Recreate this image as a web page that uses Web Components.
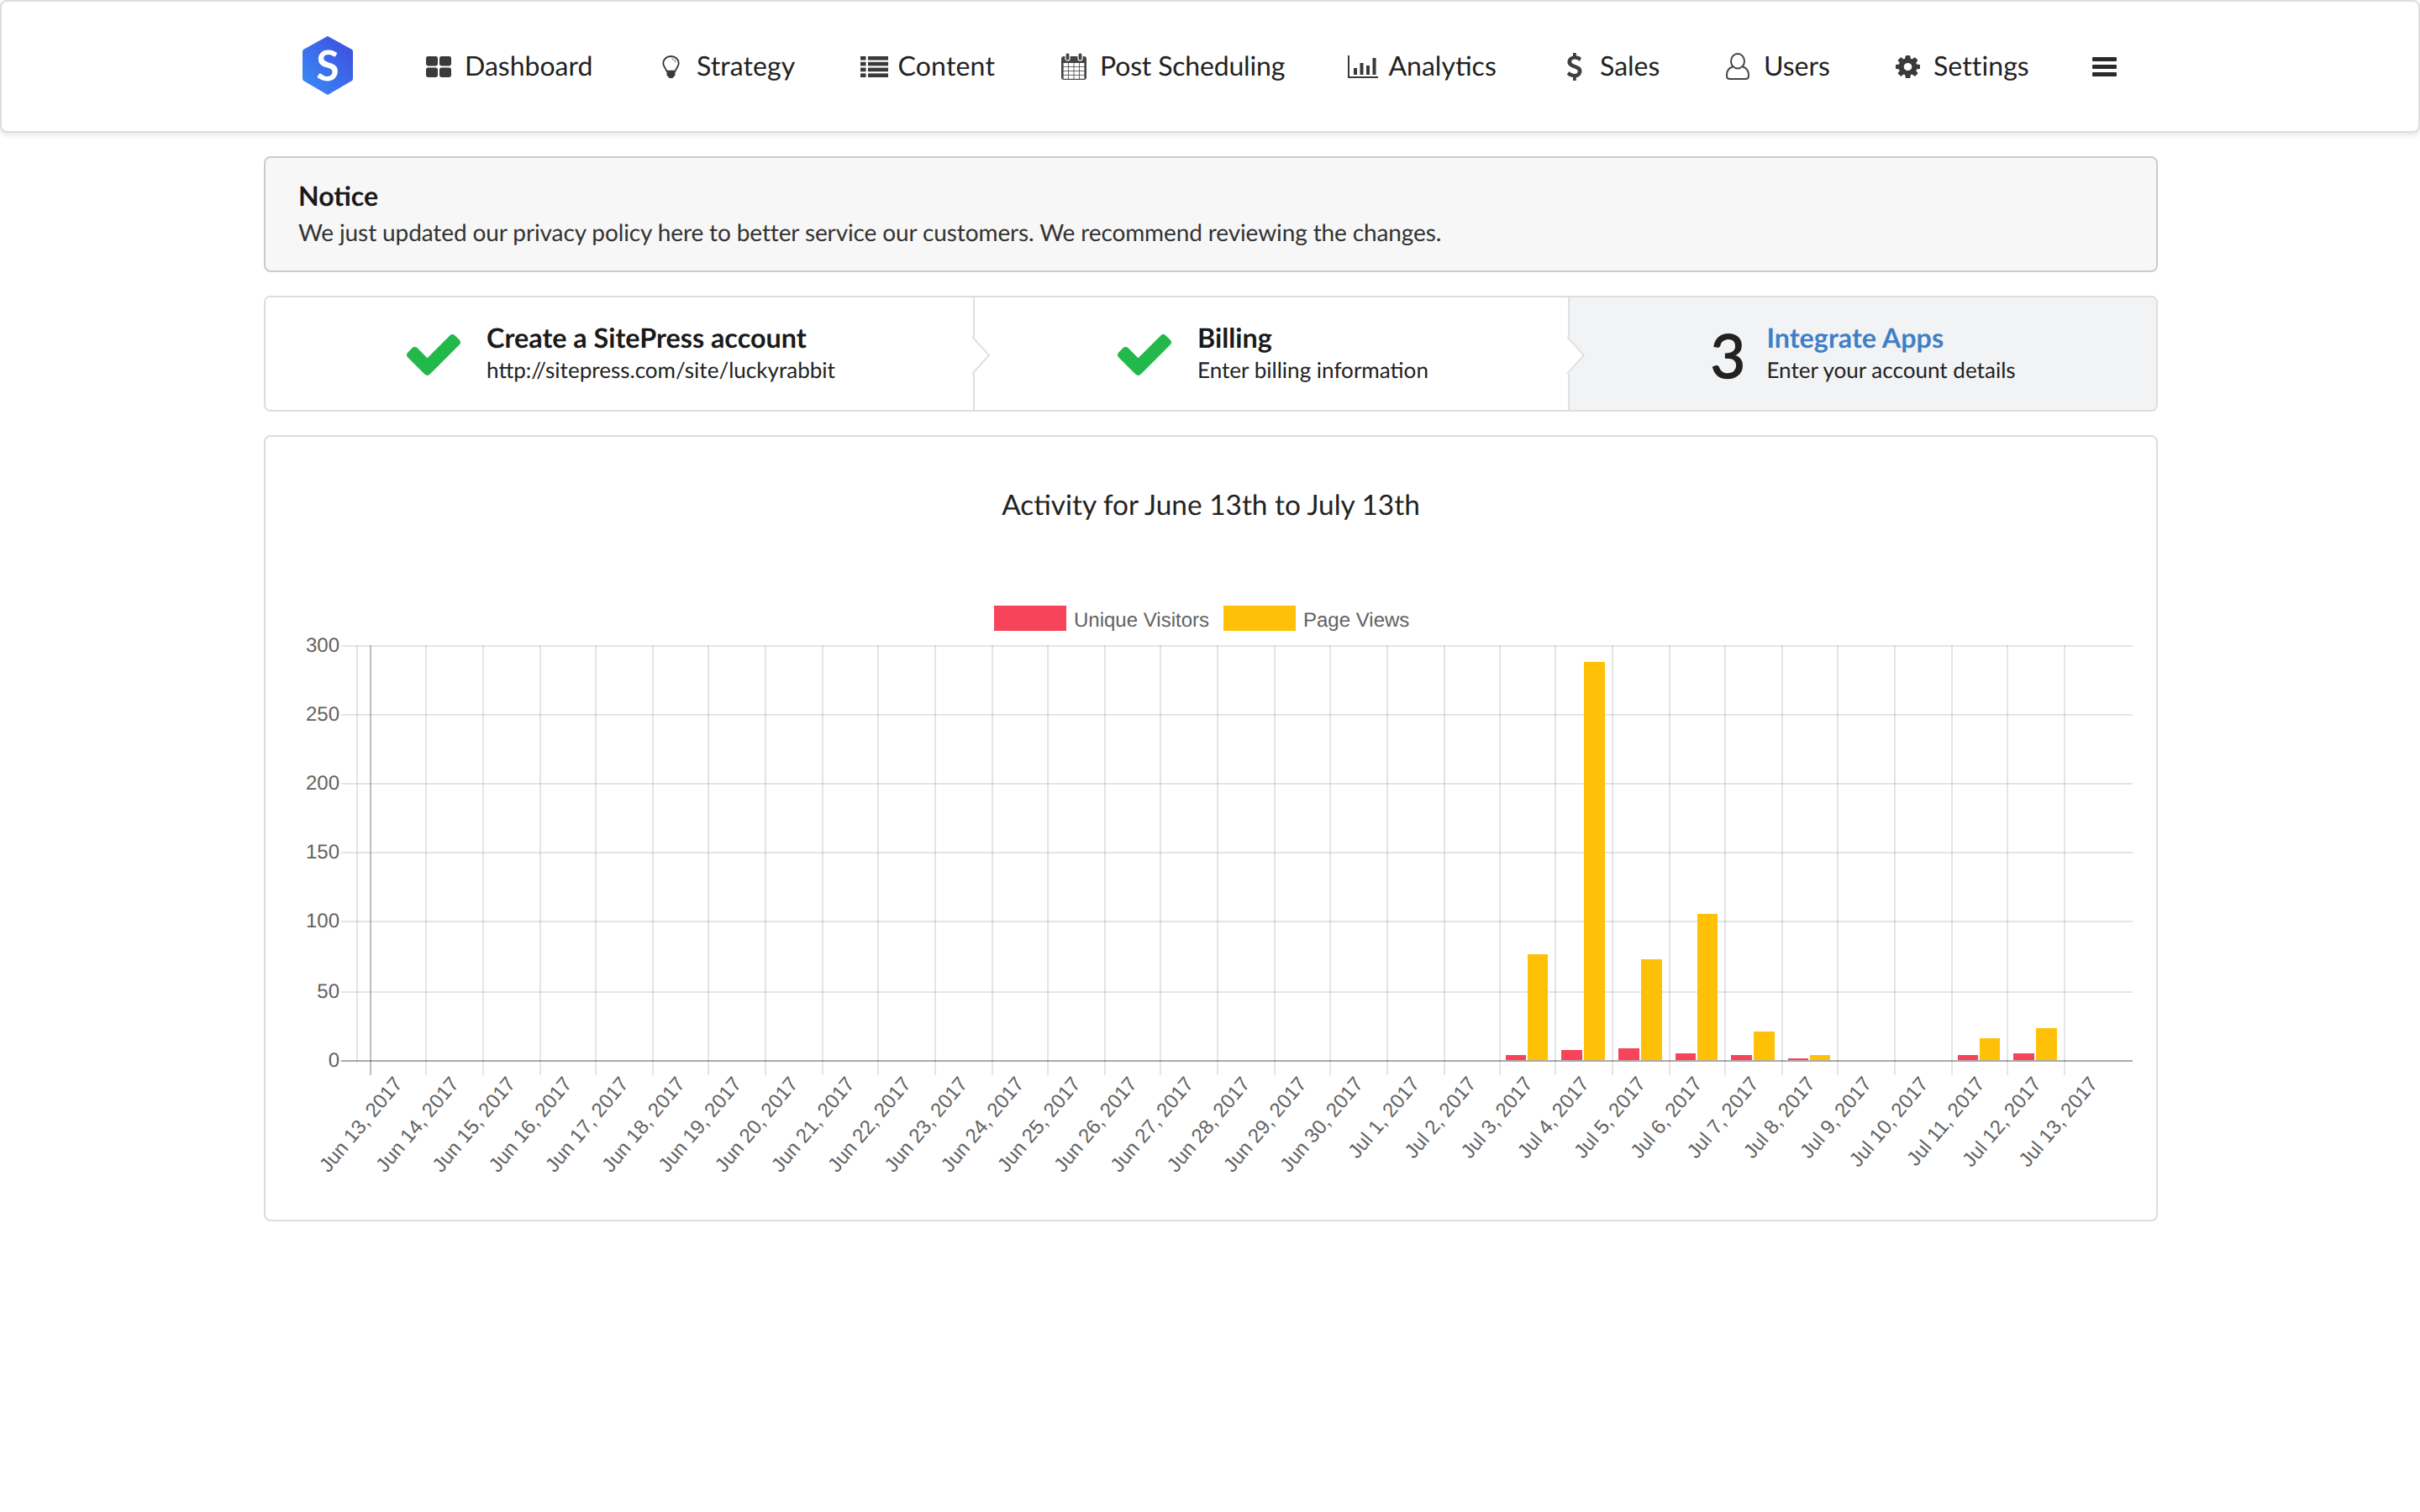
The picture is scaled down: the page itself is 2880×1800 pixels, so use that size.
<!DOCTYPE html>
<html lang="en"><head><meta charset="utf-8"><title>SitePress</title>
<style>html,body{margin:0;padding:0;background:#fff;font-family:Lato,"Noto Sans",sans-serif;color:#222;text-rendering:geometricPrecision}</style></head>
<body>
<app-nav>
  <brand-logo></brand-logo>
  <nav-item w="281" ig="46" icon="grid">Dashboard</nav-item>
  <nav-item w="235.5" ig="41" icon="bulb" style="letter-spacing:.1px">Strategy</nav-item>
  <nav-item w="239.5" ig="45" icon="list" style="letter-spacing:.2px">Content</nav-item>
  <nav-item w="340.5" ig="46" icon="cal" style="letter-spacing:-.18px">Post Scheduling</nav-item>
  <nav-item w="261" ig="49" icon="chart">Analytics</nav-item>
  <nav-item w="189.5" ig="39.5" icon="usd">Sales</nav-item>
  <nav-item w="202" ig="45" icon="user">Users</nav-item>
  <nav-item w="234" ig="45" icon="cog" style="letter-spacing:.1px">Settings</nav-item>
  <nav-item w="40" ig="40" icon="bars"></nav-item>
</app-nav>
<page-main>
  <notice-box heading="Notice">We just updated our privacy policy here to better service our customers. We recommend reviewing the changes.</notice-box>
  <step-bar>
    <step-item mark="check" heading="Create a SitePress account" w="844" arrow z="3">http://sitepress.com/site/luckyrabbit</step-item>
    <step-item mark="check" heading="Billing" w="708" arrow z="2">Enter billing information</step-item>
    <step-item mark="3" heading="Integrate Apps" active z="1">Enter your account details</step-item>
  </step-bar>
  <activity-chart heading="Activity for June 13th to July 13th"></activity-chart>
</page-main>
<script>
const def=(name,css,html,init)=>{customElements.define(name,class extends HTMLElement{
  constructor(){super();this.attachShadow({mode:'open'})}
  connectedCallback(){this.shadowRoot.innerHTML='<style>'+css+'</style>'+(typeof html==='function'?html(this):html);init&&init(this)}
})};
const ICONS={
grid:[30,25,'<rect width="14" height="11.5" rx="2.4"/><rect x="16" width="14" height="11.5" rx="2.4"/><rect y="13.5" width="14" height="11.5" rx="2.4"/><rect x="16" y="13.5" width="14" height="11.5" rx="2.4"/>','#3a3a3a'],
bulb:[21,27,'<path d="M10.5 1C5 1 1.3 4.8 1.3 9.6c0 3.6 3 5.2 4 9h10.4c1-3.800 4-5.400 4-9C19.700 4.800 16 1 10.500 1z" fill="none" stroke="#333" stroke-width="1.800"/><path d="M11.500 4c2.400.3 4.300 2 4.600 4.300" fill="none" stroke="#555" stroke-width="1"/><path d="M5.500 18h10v5.500l-3 3.500h-4l-3-3.500z"/>','#3a3a3a'],
list:[33,25,'<rect width="6.500" height="4.600"/><rect x="9" width="24" height="4.600"/><rect y="6.800" width="6.500" height="4.600"/><rect x="9" y="6.800" width="24" height="4.600"/><rect y="13.600" width="6.500" height="4.600"/><rect x="9" y="13.600" width="24" height="4.600"/><rect y="20.400" width="6.500" height="4.600"/><rect x="9" y="20.400" width="24" height="4.600"/>','#3a3a3a'],
cal:[30,32,'<rect y="4" width="30" height="28" rx="3"/>'+[0,1,2,3].map(r=>[0,1,2,3].map(c=>`<rect x="${2.6+c*6.4}" y="${12+r*4.900}" width="5.600" height="4.100" fill="#fff"/>`).join('')).join('')+'<rect x="5" y="0" width="5" height="9" rx="2.200" stroke="#fff" stroke-width="1.200"/><rect x="20" y="0" width="5" height="9" rx="2.200" stroke="#fff" stroke-width="1.200"/>','#444'],
chart:[36,27,'<rect width="2" height="27"/><rect y="25" width="36" height="2"/><rect x="7" y="15" width="4" height="8"/><rect x="14.500" y="9" width="4" height="14"/><rect x="22" y="12" width="4" height="11"/><rect x="29.500" y="3" width="4" height="20"/>','#3a3a3a'],
usd:[18,33,'<g transform="translate(-8.100 -.6) scale(.0188 .0188)"><path d="M1362 1185q0 153-99.500 263.500t-258.500 136.500v175q0 14-9 23t-23 9h-135q-13 0-22.500-9.500t-9.500-22.500v-175q-66-9-127.500-31t-101.500-44.500-74-48-46.500-37.500-17.500-18q-17-21-2-41l103-135q7-10 23-12 15-2 24 9l2 2q113 99 243 125 37 8 74 8 81 0 142.500-43t61.500-122q0-28-15-53t-33.500-42-58.500-37.500-66-32-80-32.500q-39-16-61.500-25t-61.500-26.500-62.500-31-56.500-35.500-53.500-42.500-43.500-49-35.500-58-21-66.500-8.500-78q0-138 98-242t255-134v-180q0-13 9.500-22.500t22.500-9.500h135q14 0 23 9t9 23v176q57 6 110.500 23t87 33.500 63.500 37.500 39 29 15 14q17 18 5 38l-81 146q-8 15-23 16-14 3-27-7-3-3-14.500-12t-39-26.500-58.500-32-74.500-26-85.500-11.500q-95 0-155 43t-60 111q0 26 8.500 48t29.500 41.500 39.500 33 56 31 60.500 27 70 27.500q53 20 81 31.500t76 35 75.500 42.500 62 50 53 63.500 31.500 76.500 13 94z"/></g>','#3f3f3f'],
user:[28,32,'<path d="M14 1C9.500 1 6 5 6 10c0 4.500 3.500 8.500 8 8.500s8-4 8-8.500c0-5-3.500-9-8-9z" fill="none" stroke="#444" stroke-width="2"/><path d="M8 16.500C3.500 18 1 21.500 1 26v1.500C1 29.800 2.800 31 5 31h18c2.200 0 4-1.200 4-3.500V26c0-4.500-2.500-8-7-9.500" fill="none" stroke="#444" stroke-width="2"/>','#444'],
cog:[29,27,'<g transform="scale(.01888 .01758) translate(-128 -128)"><path d="M1152 896q0-106-75-181t-181-75-181 75-75 181 75 181 181 75 181-75 75-181zm512-109v222q0 12-8 23t-20 13l-185 28q-19 54-39 91 35 50 107 138 10 12 10 25t-9 23q-27 37-99 108t-94 71q-12 0-26-9l-138-108q-44 23-91 38-16 136-29 186-7 28-36 28h-222q-14 0-24.500-8.500t-11.500-21.500l-28-184q-49-16-90-37l-141 107q-10 9-25 9-14 0-25-11-126-114-165-168-7-10-7-23 0-12 8-23 15-21 51-66.500t54-70.500q-27-50-41-99l-183-27q-13-2-21-12.500t-8-23.500v-222q0-12 8-23t19-13l186-28q14-46 39-92-40-57-107-138-10-12-10-24 0-10 9-23 26-36 98.500-107.500t94.500-71.500q13 0 26 10l138 107q44-23 91-38 16-136 29-186 7-28 36-28h222q14 0 24.500 8.500t11.500 21.500l28 184q49 16 90 37l142-107q9-9 24-9 13 0 25 10 129 119 165 170 7 8 7 22 0 12-8 23-15 21-51 66.500t-54 70.500q26 50 41 98l183 28q13 2 21 12.500t8 23.500z"/></g>','#3a3a3a'],
bars:[29,23,'<rect width="29" height="5" rx="1"/><rect y="9" width="29" height="5" rx="1"/><rect y="18" width="29" height="5" rx="1"/>','#2a2a2a']
};
def('app-nav',`:host{display:flex;align-items:center;box-sizing:border-box;height:158px;padding-left:358px;background:#fff;border:2px solid #ddd;border-radius:8px;box-shadow:0 3px 6px rgba(0,0,0,.1)}`,'<slot></slot>');
def('brand-logo',`:host{display:block;width:147px;height:70px;margin-top:-2px}svg{display:block}text{font:700 50px Lato,sans-serif;fill:#fff}`,
`<svg width="60" height="70" viewBox="0 0 60 70"><defs><linearGradient id="g" x1="1" y1="0" x2="0" y2="1"><stop offset="0" stop-color="#4049dc"/><stop offset="1" stop-color="#3790f8"/></linearGradient></defs><path d="M30 0 59 16Q60 17 60 19V50Q60 52 59 53L30 70 1 53Q0 52 0 50V19Q0 17 1 16z" fill="url(#g)"/><text x="30" y="53" text-anchor="middle">S</text></svg>`);
def('nav-item',`:host{display:flex;align-items:center;height:40px;font-size:32px;line-height:38px;color:#222;white-space:nowrap}.i{flex:none;display:flex;align-items:center}svg{display:block}span{position:relative;top:-1px}`,
el=>{const a=ICONS[el.getAttribute('icon')];return `<div class="i" style="width:${el.getAttribute('ig')}px"><svg width="${a[0]}" height="${a[1]}" viewBox="0 0 ${a[0]} ${a[1]}" fill="${a[3]}">${a[2]}</svg></div><span><slot></slot></span>`},
el=>{el.style.width=el.getAttribute('w')+'px'});
def('page-main',`:host{display:flex;flex-direction:column;gap:28px;width:2254px;margin:28px 0 0 314px}`,'<slot></slot>');
def('notice-box',`:host{display:block;box-sizing:border-box;height:138px;padding:24px 39px;background:#f7f7f7;border:2px solid #ccc;border-radius:8px}
h4{margin:0;font-size:32px;line-height:42px;font-weight:700;color:#1a1a1a}p{margin:0;font-size:28px;line-height:44px;letter-spacing:-.115px;color:#333}`,
el=>`<h4>${el.getAttribute('heading')}</h4><p><slot></slot></p>`);
def('step-bar',`:host{display:flex;box-sizing:border-box;height:138px;border:2px solid #ddd;border-radius:8px;overflow:hidden;background:#fff}`,'<slot></slot>');
def('step-item',`:host{display:flex;align-items:center;justify-content:center;box-sizing:border-box;position:relative;height:100%;background:#fff}
:host([active]){flex:1;background:#f2f3f5}:host([arrow]){border-right:2px solid #e0e0e0;padding-left:4px}
.m{flex:none;margin-right:31px;display:block}.n{flex:none;margin-right:28px;font-size:72px;line-height:72px;color:#222;width:39px;text-align:center;position:relative;top:2px;-webkit-text-stroke:1.5px #222}
.t{padding-bottom:1px}h4{margin:0;font-size:32.3px;line-height:38px;font-weight:700;color:#1a1a1a;white-space:nowrap}:host([active]) h4{color:#3f7fc5}
p{margin:0;font-size:26.05px;line-height:38px;color:#222;white-space:nowrap}
.a{position:absolute;left:100%;top:46px;margin-left:-2px;display:block}`,
el=>{const m=el.getAttribute('mark');
const mk=m==='check'?`<svg class="m" width="64" height="49" viewBox="121 334 1550 1188" preserveAspectRatio="none" style="position:relative;top:1px"><path fill="#22b84a" d="M1671 566q0 40-28 68l-724 724-136 136q-28 28-68 28t-68-28l-136-136-362-362q-28-28-28-68t28-68l136-136q28-28 68-28t68 28l294 295 656-657q28-28 68-28t68 28l136 136q28 28 28 68z"/></svg>`:`<div class="n">${m}</div>`;
return `${mk}<div class="t"><h4>${el.getAttribute('heading')}</h4><p><slot></slot></p></div>`+(el.hasAttribute('arrow')?`<svg class="a" width="24" height="46" viewBox="0 0 24 46"><path d="M0 0H2L22 23 2 46H0z" fill="#fff"/><path d="M1 1 21 23 1 45" fill="none" stroke="#e0e0e0" stroke-width="2"/></svg>`:'')},
el=>{const w=el.getAttribute('w');if(w){el.style.flex='0 0 '+w+'px';}el.style.zIndex=el.getAttribute('z')});
def('activity-chart',`:host{display:block;box-sizing:border-box;height:936px;background:#fff;border:2px solid #ddd;border-radius:8px}
h3{margin:0;padding:61px 0 69px;font-size:33.400px;line-height:40px;font-weight:400;text-align:center;color:#222}svg{display:block}
text{font:24px "Liberation Sans",Arial,sans-serif;fill:#626262}`,
el=>{
 const ys=[769,851,933,1015,1097,1181,1263],ylab=[300,250,200,150,100,50,0];
 const over=[1785,1851,1919,1987,2053,2121,2187,2255,2323,2389,2457];
 const gx=i=>i>=20?over[i-20]:2*Math.round((440.4+67.25*i-1)/2)+1;
 const labs=[];for(let d=13;d<=30;d++)labs.push('Jun '+d+', 2017');for(let d=1;d<=13;d++)labs.push('Jul '+d+', 2017');
 let s='';
 s+='<rect x="1183" y="721" width="86" height="30" fill="#f7445a"/><text x="1278" y="746">Unique Visitors</text><rect x="1456" y="721" width="86" height="30" fill="#ffc107"/><text x="1551" y="746">Page Views</text>';
 s+=`<line x1="425" x2="425" y1="768" y2="1264" stroke="rgba(0,0,0,.1)" stroke-width="2"/>`;
 labs.forEach((l,i)=>{const x=gx(i);s+=`<line x1="${x}" x2="${x}" y1="768" y2="1280" stroke="rgba(0,0,0,${i?.1:.25})" stroke-width="2"/>`});
 ys.forEach((y,i)=>{s+=`<line x1="406" x2="2538" y1="${y}" y2="${y}" stroke="rgba(0,0,0,${i==6?.33:.1})" stroke-width="2"/>`;
   s+=`<text x="404" y="${y+7}" text-anchor="end">${ylab[i]}</text>`});
 const red=[[1792,1816,1256],[1858,1883,1250],[1926,1951,1248],[1994,2018,1254],[2060,2085,1256],[2128,2152,1260],[2330,2354,1256],[2396,2421,1254]];
 const yel=[[1818,1842,1136],[1885,1910,788],[1953,1978,1142],[2020,2044,1088],[2087,2112,1228],[2154,2178,1256],[2356,2380,1236],[2423,2448,1224]];
 red.forEach(b=>s+=`<rect x="${b[0]}" y="${b[2]}" width="${b[1]-b[0]}" height="${1262-b[2]}" fill="#f7445a"/>`);
 yel.forEach(b=>s+=`<rect x="${b[0]}" y="${b[2]}" width="${b[1]-b[0]}" height="${1262-b[2]}" fill="#ffc107"/>`);
 labs.forEach((l,i)=>{const x=(440.4+67.25*i+33.6).toFixed(1);s+=`<text text-anchor="end" transform="translate(${x} 1285.500) rotate(-50)" y="8">${l}</text>`});
 return `<h3>${el.getAttribute('heading')}</h3><svg width="2250" height="762" viewBox="316 690 2250 762">${s}</svg>`;
});
</script>
</body></html>
